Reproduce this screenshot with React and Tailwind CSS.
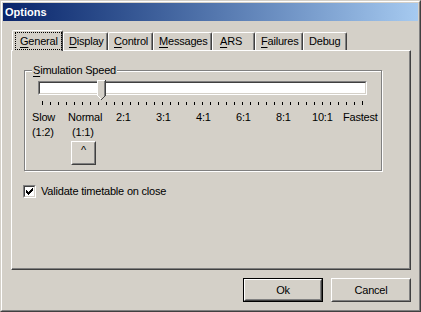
import React from 'react';

const tabs = [
  { label: 'General', key: 'G', w: 'w-[51px]', active: true },
  { label: 'Display', key: 'D', w: 'w-[45px]' },
  { label: 'Control', key: 'C', w: 'w-[45px]' },
  { label: 'Messages', key: 'M', w: 'w-[59px]' },
  { label: 'ARS', key: 'A', w: 'w-[43px]', pad: 'pl-[7px]' },
  { label: 'Failures', key: 'F', w: 'w-[48px]' },
  { label: 'Debug', key: '', w: 'w-[44px]' },
];

const speeds = [
  { top: 'Slow', w: 'w-[36px]' },
  { top: 'Normal', w: 'w-[48px]' },
  { top: '2:1', w: 'w-[40px]' },
  { top: '3:1', w: 'w-[40px]' },
  { top: '4:1', w: 'w-[40px]' },
  { top: '6:1', w: 'w-[40px]' },
  { top: '8:1', w: 'w-[36px]' },
  { top: '10:1', w: 'w-[31px]' },
  { top: 'Fastest', w: '' },
];

const Mnemonic = ({ text, k }) => {
  if (!k) return <span>{text}</span>;
  return (
    <span>
      <span className="underline underline-offset-[2px]">{text[0]}</span>
      {text.slice(1)}
    </span>
  );
};

const Ticks = () => {
  const ticks = Array.from({ length: 41 }, (_, i) => i);
  return (
    <svg width="329" height="5" className="block" shapeRendering="crispEdges">
      {ticks.map((i) => (
        <rect
          key={i}
          x={4 + i * 8}
          y={i === 0 || i === 40 ? 0 : 1}
          width="1"
          height={i === 0 || i === 40 ? 4 : 3}
          fill="#000"
        />
      ))}
    </svg>
  );
};

const Thumb = () => (
  <svg width="9" height="21" className="block" shapeRendering="crispEdges">
    <polygon points="0,0 9,0 9,16 4.5,20.5 0,16" fill="#d4d0c8" />
    <rect x="0" y="0" width="8" height="1" fill="#fff" />
    <rect x="0" y="0" width="1" height="16" fill="#fff" />
    <rect x="8" y="0" width="1" height="16" fill="#404040" />
    <rect x="7" y="1" width="1" height="15" fill="#808080" />
    <rect x="1" y="16" width="1" height="1" fill="#fff" />
    <rect x="2" y="17" width="1" height="1" fill="#fff" />
    <rect x="3" y="18" width="1" height="1" fill="#fff" />
    <rect x="7" y="16" width="1" height="1" fill="#404040" />
    <rect x="6" y="17" width="1" height="1" fill="#404040" />
    <rect x="5" y="18" width="1" height="1" fill="#404040" />
    <rect x="4" y="19" width="1" height="1" fill="#404040" />
  </svg>
);

const CheckMark = () => {
  const px = [
    [6, 0], [5, 1], [6, 1], [0, 2], [4, 2], [5, 2], [6, 2],
    [0, 3], [1, 3], [3, 3], [4, 3], [5, 3],
    [0, 4], [1, 4], [2, 4], [3, 4], [4, 4],
    [1, 5], [2, 5], [3, 5], [2, 6],
  ];
  return (
    <svg width="7" height="7" className="block" shapeRendering="crispEdges">
      {px.map(([x, y], i) => (
        <rect key={i} x={x} y={y} width="1" height="1" fill="#000" />
      ))}
    </svg>
  );
};

const RaisedButton = ({ children, className = '', isDefault }) => (
  <div className={`${isDefault ? 'border border-black' : ''} ${className}`}>
    <div className="h-full border border-t-white border-l-white border-r-[#404040] border-b-[#404040]">
      <div className="h-full flex items-center justify-center border border-t-[#d4d0c8] border-l-[#d4d0c8] border-r-[#808080] border-b-[#808080]">
        {children}
      </div>
    </div>
  </div>
);

export default function App() {
  return (
    <div className="w-[421px] h-[312px] bg-[#d4d0c8] border border-t-[#d4d0c8] border-l-[#d4d0c8] border-r-[#404040] border-b-[#404040] font-['Liberation_Sans',Arial,sans-serif] text-[11px] tracking-[-0.2px] text-black select-none">
      <div className="h-full border border-t-white border-l-white border-r-[#808080] border-b-[#808080] p-px flex flex-col">
        {/* Title bar */}
        <div className="h-[18px] bg-gradient-to-r from-[#0a246a] to-[#a6caf0] flex items-center pl-[2px] text-white font-bold leading-none tracking-normal">
          Options
        </div>

        <div className="flex-1 pt-[9px] pl-[8px] pr-[7px]">
          {/* Tabs */}
          <div className="h-[20px] flex items-end pl-px">
            {tabs.map((t) =>
              t.active ? (
                <div
                  key={t.label}
                  className={`${t.w} h-[21px] -mb-px relative z-10 bg-[#d4d0c8] border-l border-t border-white border-r border-r-[#404040] rounded-t-[2px] shadow-[inset_-1px_0_0_#808080] pl-[2px] pt-[1px]`}
                >
                  <div className="h-[18px] w-[47px] border border-dotted border-black flex items-center pl-[4px] leading-none">
                    <Mnemonic text={t.label} k={t.key} />
                  </div>
                </div>
              ) : (
                <div
                  key={t.label}
                  className={`${t.w} h-[18px] border-l border-t border-white border-r border-r-[#404040] rounded-t-[2px] shadow-[inset_-1px_0_0_#808080] ${t.pad || 'pl-[5px]'} flex items-center leading-none`}
                >
                  <Mnemonic text={t.label} k={t.key} />
                </div>
              )
            )}
          </div>

          {/* Tab panel */}
          <div className="h-[220px] border border-t-white border-l-white border-r-[#404040] border-b-[#404040] shadow-[inset_-1px_-1px_0_#808080] pt-[19px] pl-[12px]">
            {/* Group box */}
            <div className="relative w-[358px] h-[101px] border border-[#808080] shadow-[inset_1px_1px_0_#fff,1px_1px_0_#fff]">
              <span className="absolute -top-[8px] left-[7px] px-px bg-[#d4d0c8] leading-[14px]">
                <Mnemonic text="Simulation Speed" k="S" />
              </span>

              <div className="pt-[10px] pl-[13px]">
                {/* Track */}
                <div className="relative w-[329px] h-[14px] border border-t-[#808080] border-l-[#808080] border-r-white border-b-white">
                  <div className="h-full bg-white border border-t-[#404040] border-l-[#404040] border-r-[#d4d0c8] border-b-[#d4d0c8]" />
                  <div className="absolute left-[58px] -top-[2px]">
                    <Thumb />
                  </div>
                </div>
                <div className="mt-[6px]">
                  <Ticks />
                </div>
              </div>

              {/* Labels */}
              <div className="pl-[7px] mt-[4px] leading-[15px]">
                <div className="flex">
                  {speeds.map((s) => (
                    <div key={s.top} className={`${s.w} shrink-0`}>
                      {s.top}
                    </div>
                  ))}
                </div>
                <div className="flex">
                  <div className="w-[40px] shrink-0">(1:2)</div>
                  <div>(1:1)</div>
                </div>
                <RaisedButton className="ml-[39px] mt-[1px] w-[25px] h-[24px]">
                  <span className="-mt-[6px] text-[11px]">^</span>
                </RaisedButton>
              </div>
            </div>

            {/* Checkbox */}
            <div className="flex items-center mt-[14px] -ml-px">
              <div className="w-[13px] h-[13px] border border-t-[#808080] border-l-[#808080] border-r-white border-b-white">
                <div className="h-full bg-white border border-t-[#404040] border-l-[#404040] border-r-[#d4d0c8] border-b-[#d4d0c8] flex items-center justify-center">
                  <CheckMark />
                </div>
              </div>
              <span className="ml-[5px] leading-none">Validate timetable on close</span>
            </div>
          </div>

          {/* Buttons */}
          <div className="mt-[8px] flex justify-end gap-[8px]">
            <RaisedButton isDefault className="w-[80px] h-[24px]">
              Ok
            </RaisedButton>
            <RaisedButton className="w-[80px] h-[24px]">Cancel</RaisedButton>
          </div>
        </div>
      </div>
    </div>
  );
}
